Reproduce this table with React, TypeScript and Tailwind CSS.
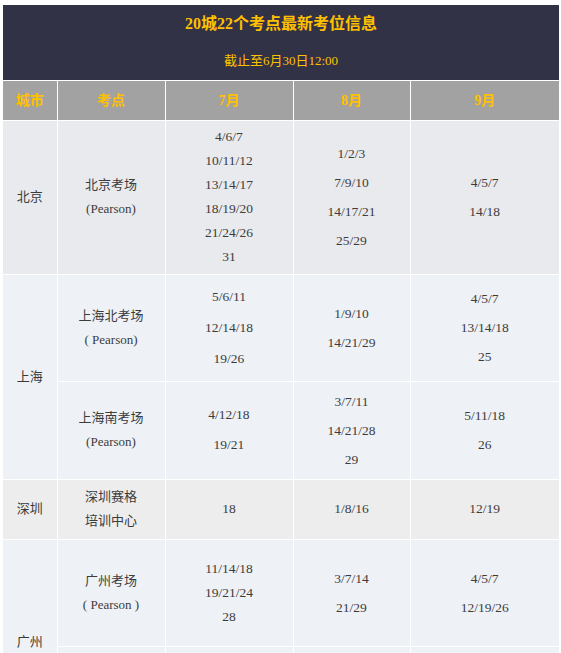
import React from "react";

type Cell = { lines: string[]; lh: string };

type Row = {
  city?: { name: string; span: number };
  venue: Cell;
  m7: Cell;
  m8: Cell;
  m9: Cell;
  bg: string;
  h: string;
};

const rows: Row[] = [
  {
    city: { name: "北京", span: 1 },
    venue: { lines: ["北京考场", "(Pearson)"], lh: "leading-[24px]" },
    m7: { lines: ["4/6/7", "10/11/12", "13/14/17", "18/19/20", "21/24/26", "31"], lh: "leading-[24px]" },
    m8: { lines: ["1/2/3", "7/9/10", "14/17/21", "25/29"], lh: "leading-[29px]" },
    m9: { lines: ["4/5/7", "14/18"], lh: "leading-[29px]" },
    bg: "bg-[#e9eaee]",
    h: "h-[154px]",
  },
  {
    city: { name: "上海", span: 2 },
    venue: { lines: ["上海北考场", "( Pearson)"], lh: "leading-[24px]" },
    m7: { lines: ["5/6/11", "12/14/18", "19/26"], lh: "leading-[31px]" },
    m8: { lines: ["1/9/10", "14/21/29"], lh: "leading-[29px]" },
    m9: { lines: ["4/5/7", "13/14/18", "25"], lh: "leading-[29px]" },
    bg: "bg-[#eef1f6]",
    h: "h-[107px]",
  },
  {
    venue: { lines: ["上海南考场", "(Pearson)"], lh: "leading-[24px]" },
    m7: { lines: ["4/12/18", "19/21"], lh: "leading-[30px]" },
    m8: { lines: ["3/7/11", "14/21/28", "29"], lh: "leading-[29px]" },
    m9: { lines: ["5/11/18", "26"], lh: "leading-[29px]" },
    bg: "bg-[#eef1f6]",
    h: "h-[98px]",
  },
  {
    city: { name: "深圳", span: 1 },
    venue: { lines: ["深圳赛格", "培训中心"], lh: "leading-[24px]" },
    m7: { lines: ["18"], lh: "leading-[24px]" },
    m8: { lines: ["1/8/16"], lh: "leading-[24px]" },
    m9: { lines: ["12/19"], lh: "leading-[24px]" },
    bg: "bg-[#ededed]",
    h: "h-[60px]",
  },
  {
    city: { name: "广州", span: 2 },
    venue: { lines: ["广州考场", "( Pearson )"], lh: "leading-[24px]" },
    m7: { lines: ["11/14/18", "19/21/24", "28"], lh: "leading-[24px]" },
    m8: { lines: ["3/7/14", "21/29"], lh: "leading-[29px]" },
    m9: { lines: ["4/5/7", "12/19/26"], lh: "leading-[29px]" },
    bg: "bg-[#eef1f6]",
    h: "h-[107px]",
  },
  {
    venue: { lines: [], lh: "leading-[24px]" },
    m7: { lines: [], lh: "leading-[29px]" },
    m8: { lines: [], lh: "leading-[29px]" },
    m9: { lines: [], lh: "leading-[29px]" },
    bg: "bg-[#eef1f6]",
    h: "h-[98px]",
  },
];

function Lines({ cell }: { cell: Cell }) {
  return (
    <div className={`flex flex-col items-center ${cell.lh}`}>
      {cell.lines.map((l, i) => (
        <span key={i} className="whitespace-pre">
          {l}
        </span>
      ))}
    </div>
  );
}

export default function App() {
  const font = "font-['Liberation_Serif','Noto_Sans_CJK_SC',serif]";
  return (
    <div className={`bg-white w-[561px] h-[653px] overflow-hidden pl-[3px] pt-[5px] ${font}`}>
      <div className="w-[556px] h-[75px] bg-[#313245] flex flex-col items-center text-[#ffc000]">
        <div className="mt-[9px] text-[16px] font-bold leading-[20px]">20城22个考点最新考位信息</div>
        <div className="mt-[17px] text-[13px] leading-[20px]">截止至6月30日12:00</div>
      </div>
      <table className="table-fixed border-collapse w-[556px] mt-[1px] text-[#3c3c3c] text-[13.5px]">
        <colgroup>
          <col className="w-[54px]" />
          <col className="w-[108px]" />
          <col className="w-[128px]" />
          <col className="w-[117px]" />
          <col className="w-[149px]" />
        </colgroup>
        <thead>
          <tr className="h-[39px] bg-[#a2a2a2] text-[#ffc000] text-[14px] font-bold">
            <th className="border border-white border-t-0 border-l-0 font-bold">城市</th>
            <th className="border border-white border-t-0 font-bold">考点</th>
            <th className="border border-white border-t-0 font-bold">7月</th>
            <th className="border border-white border-t-0 font-bold">8月</th>
            <th className="border border-white border-t-0 border-r-0 font-bold">9月</th>
          </tr>
        </thead>
        <tbody>
          {rows.map((r, i) => (
            <tr key={i} className={`${r.h} ${r.bg}`}>
              {r.city && (
                <td
                  rowSpan={r.city.span}
                  className="border border-white border-l-0 text-center align-middle text-[13px] text-[#3a3a3a]"
                >
                  {r.city.name}
                </td>
              )}
              <td className="border border-white text-center align-middle text-[13px]">
                <Lines cell={r.venue} />
              </td>
              <td className="border border-white text-center align-middle">
                <Lines cell={r.m7} />
              </td>
              <td className="border border-white text-center align-middle">
                <Lines cell={r.m8} />
              </td>
              <td className="border border-white border-r-0 text-center align-middle">
                <Lines cell={r.m9} />
              </td>
            </tr>
          ))}
        </tbody>
      </table>
    </div>
  );
}
